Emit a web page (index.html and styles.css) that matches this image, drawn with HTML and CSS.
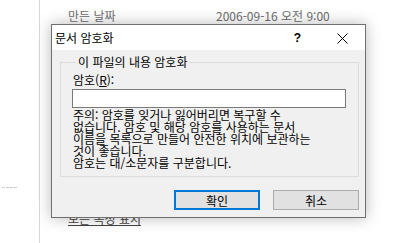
FILE: index.html
```html
<!DOCTYPE html>
<html lang="ko">
<head>
    <meta charset="UTF-8">
    <title>문서 암호화</title>
    <link rel="stylesheet" href="styles.css">
</head>
<body>

    <div class="page">
        <div class="side">
            <div class="dash"></div>
        </div>
        <div class="props">
            <div class="prop-row">
                <span class="prop-name">만든 날짜</span>
                <span class="prop-value">2006-09-16 오전 9:00</span>
            </div>
            <a class="all-props">모든 속성 표시</a>
        </div>
    </div>

    <div class="dialog">
        <div class="titlebar">
            <span class="title">문서 암호화</span>
            <span class="help">?</span>
            <svg class="close" width="11" height="11" viewBox="0 0 11 11">
                <path d="M0.5 0.5 L10.5 10.5 M10.5 0.5 L0.5 10.5" stroke="#000" stroke-width="1" fill="none"/>
            </svg>
        </div>
        <div class="dialog-body">
            <fieldset class="group">
                <legend>이 파일의 내용 암호화</legend>
                <label class="pw-label" for="pw">암호(<u>R</u>):</label>
                <input type="password" id="pw" class="pw-input">
                <p class="note">
                    주의: 암호를 잊거나 잃어버리면 복구할 수<br>
                    없습니다. 암호 및 해당 암호를 사용하는 문서<br>
                    이름을 목록으로 만들어 안전한 위치에 보관하는<br>
                    것이 좋습니다.<br>
                    암호는 대/소문자를 구분합니다.
                </p>
            </fieldset>
            <div class="actions">
                <button class="btn default">확인</button>
                <button class="btn">취소</button>
            </div>
        </div>
    </div>

</body>
</html>
```

FILE: styles.css
```css
body {
    margin: 0;
    font-family: "Noto Sans CJK KR", "Noto Sans", sans-serif;
    font-size: 12px;
    background: #fff;
    color: #000;
}
.page {
    display: flex;
    height: 243px;
}
.side {
    width: 39px;
    border-right: 1px solid #d9d9d9;
}
.dash {
    margin: 187px 0 0 2px;
    width: 15px;
    border-top: 1px dashed #c8c8c8;
}
.props {
    flex: 1;
    padding: 9px 0 0 28px;
    display: flex;
    flex-direction: column;
}
.prop-row {
    display: flex;
    line-height: 14px;
    color: #6d6d6d;
}
.prop-name {
    width: 148px;
}
.all-props {
    margin-top: 189px;
    color: #444;
    text-decoration: underline;
    line-height: 14px;
}

/* dialog */
.dialog {
    position: absolute;
    left: 51px;
    top: 24px;
    width: 313px;
    height: 192px;
    border: 1px solid #707070;
    background: #f0f0f0;
    box-shadow: 0 0 14px rgba(0, 0, 0, 0.28);
    display: flex;
    flex-direction: column;
}
.titlebar {
    height: 25px;
    background: #fff;
    display: flex;
    align-items: center;
}
.title {
    margin-left: 3px;
    flex: 1;
    line-height: 12px;
}
.help {
    margin-right: 36px;
    font-family: "Liberation Sans", sans-serif;
    font-weight: bold;
    font-size: 12px;
}
.close {
    margin-right: 17px;
    margin-top: 2px;
}
.dialog-body {
    padding: 6px 6px 0 8px;
}
.group {
    margin: 0;
    padding: 6px 12px 7px 11px;
    border: 1px solid #dcdcdc;
    line-height: 12px;
}
.group legend {
    padding: 0 2px;
    margin-left: 4px;
    line-height: 12px;
}
.pw-label {
    display: block;
    margin-left: 1px;
}
.pw-input {
    display: block;
    box-sizing: border-box;
    width: 100%;
    height: 19px;
    margin: 3px 0 1px;
    border: 1px solid #7a7a7a;
    background: #fff;
}
.note {
    margin: 0 0 0 1px;
    line-height: 12px;
}
.actions {
    display: flex;
    justify-content: flex-end;
    gap: 13px;
    margin-top: 13px;
}
.btn {
    box-sizing: border-box;
    width: 86px;
    height: 20px;
    padding: 0;
    font-family: inherit;
    font-size: 12px;
    background: #e1e1e1;
    border: 1px solid #adadad;
}
.btn.default {
    border: 2px solid #0078d7;
}
```
